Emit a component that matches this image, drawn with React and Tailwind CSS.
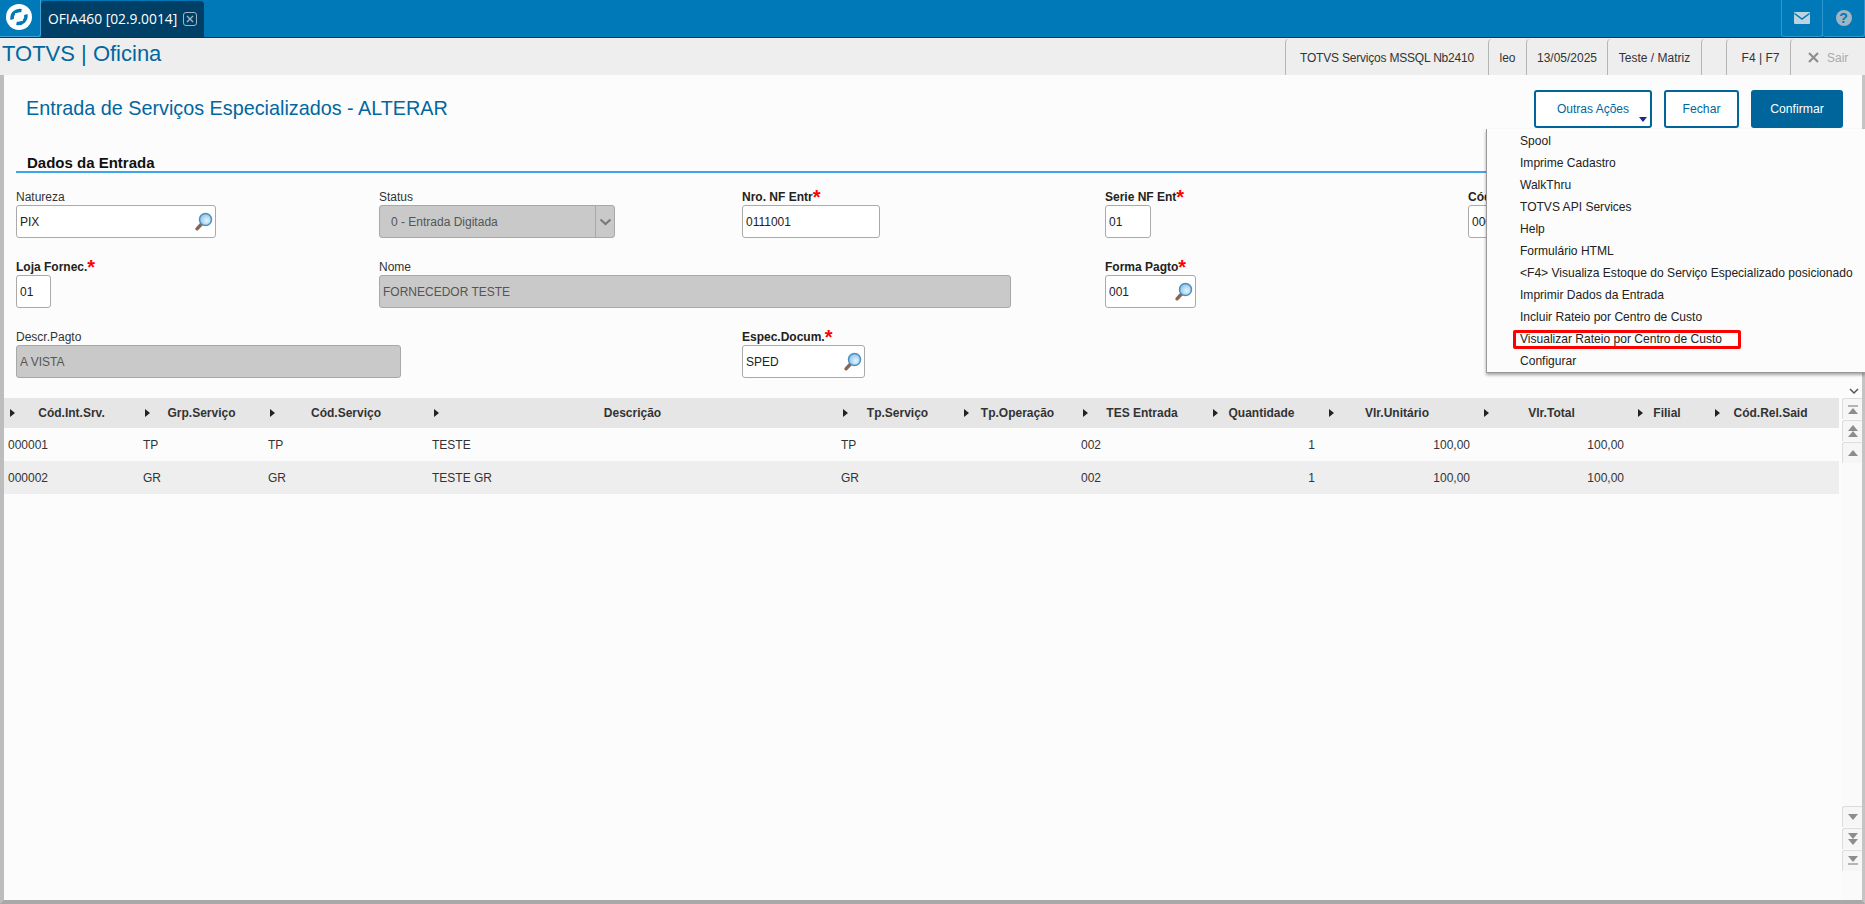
const menuItems = [
  'Spool',
  'Imprime Cadastro',
  'WalkThru',
  'TOTVS API Services',
  'Help',
  'Formulário HTML',
  '<F4> Visualiza Estoque do Serviço Especializado posicionado',
  'Imprimir Dados da Entrada',
  'Incluir Rateio por Centro de Custo',
  'Visualizar Rateio por Centro de Custo',
  'Configurar',
]

const columns = ['Cód.Int.Srv.', 'Grp.Serviço', 'Cód.Serviço', 'Descrição', 'Tp.Serviço', 'Tp.Operação', 'TES Entrada', 'Quantidade', 'Vlr.Unitário', 'Vlr.Total', 'Filial', 'Cód.Rel.Said']

const rows = [
  ['000001', 'TP', 'TP', 'TESTE', 'TP', '', '002', '1', '100,00', '100,00', '', ''],
  ['000002', 'GR', 'GR', 'TESTE GR', 'GR', '', '002', '1', '100,00', '100,00', '', ''],
]

const gridCols = 'grid grid-cols-[135px_125px_164px_409px_121px_119px_130px_116px_155px_154px_77px_130px]'

function Lupa() {
  return (
    <svg width="20" height="20" viewBox="0 0 20 20" className="shrink-0">
      <defs>
        <radialGradient id="vidro" cx="0.6" cy="0.6" r="0.7">
          <stop offset="0" stopColor="#e4f4fc" />
          <stop offset="1" stopColor="#7fbce6" />
        </radialGradient>
      </defs>
      <path d="M7.5 12L3 16.8" stroke="#8a6650" strokeWidth="3.4" strokeLinecap="round" />
      <circle cx="11.5" cy="7.5" r="6" fill="url(#vidro)" stroke="#4a8fbf" strokeWidth="1.5" />
    </svg>
  )
}

function Logo() {
  return (
    <svg width="26" height="26" viewBox="0 0 26 26">
      <circle cx="13" cy="13" r="13" fill="#fff" />
      <path d="M6.2 15.5C5 10.5 9.5 5.5 15.5 6.6" stroke="#0079b8" strokeWidth="3.4" fill="none" />
      <path d="M19.8 10.5C21 15.5 16.5 20.5 10.5 19.4" stroke="#0079b8" strokeWidth="3.4" fill="none" />
      <path d="M9 9h6l2 8h-6z" fill="#fff" />
    </svg>
  )
}

function Field({ label, required, value, width, disabled, lupa, select, className }) {
  return (
    <div className={className}>
      <div className={'h-[17px] leading-[16px] whitespace-nowrap ' + (required ? 'pt-[1px] font-bold text-[#222]' : 'pt-[1px] text-[#333]')}>
        {label}
        {required && <span className="text-[#ff0000] text-[20px] leading-[10px] font-bold align-[-3px]">*</span>}
      </div>
      <div
        className={'h-[33px] flex items-center border rounded-[3px] ' +
          (disabled ? 'bg-[#c9c9c9] border-[#a8a8a8] text-[#555] ' : 'bg-white border-[#aaaaaa] text-[#222] ')}
        style={{ width }}
      >
        <span className={'flex-1 whitespace-nowrap ' + (select ? 'pl-[11px]' : 'pl-[3px]')}>{value}</span>
        {lupa && <span className="pr-[1px]"><Lupa /></span>}
        {select && (
          <span className="w-[19px] h-full border-l border-[#a8a8a8] flex items-center justify-center">
            <svg width="13" height="8" viewBox="0 0 13 8"><path d="M1.5 1.5L6.5 6l5-4.5" stroke="#7a7a7a" strokeWidth="2.2" fill="none" /></svg>
          </span>
        )}
      </div>
    </div>
  )
}

function ScrollBtn({ children }) {
  return (
    <div className="h-[21px] w-[20px] bg-[#f6f6f6] border-l border-t border-[#dcdcdc] rounded-tl-[3px] flex flex-col items-center justify-center">
      {children}
    </div>
  )
}

const Up = () => <span className="w-0 h-0 border-l-[5px] border-r-[5px] border-b-[6px] border-l-transparent border-r-transparent border-b-[#8d8d8d]" />
const Down = () => <span className="w-0 h-0 border-l-[5px] border-r-[5px] border-t-[6px] border-l-transparent border-r-transparent border-t-[#8d8d8d]" />
const Bar = () => <span className="w-[10px] h-[2px] bg-[#b5b5b5] my-[1px]" />

export default function App() {
  return (
    <div className="relative h-[904px] w-full overflow-hidden flex flex-col bg-[#eeeeee] text-[12px] text-[#222]" style={{ fontFamily: '"Liberation Sans", Arial, sans-serif' }}>
      {/* Barra azul */}
      <div className="h-[38px] shrink-0 flex bg-[#0079b8] border-b-[1px] border-[#00395c]">
        <div className="w-[41px] flex items-center justify-center pb-[3px] pr-[3px] border-r border-b border-[#3fa3d8] rounded-br-[3px]">
          <Logo />
        </div>
        <div className="w-[163px] bg-[#003f66] rounded-t-[4px] mt-[1px] flex items-center pl-[7px] text-white text-[13.8px]" style={{ fontFamily: '"Open Sans", sans-serif' }}>
          <span className="whitespace-nowrap">OFIA460 [02.9.0014]</span>
          <span className="ml-[6px] w-[14px] h-[14px] border border-[#9fb6c4] rounded-[3px] flex items-center justify-center">
            <svg width="8" height="8" viewBox="0 0 8 8"><path d="M1 1l6 6M7 1L1 7" stroke="#9fb6c4" strokeWidth="1.4" /></svg>
          </span>
        </div>
        <div className="flex-1" />
        <div className="w-[42px] flex items-center justify-center border-l border-b border-r border-[#2f97cf] rounded-b-[3px]">
          <svg width="16" height="12" viewBox="0 0 16 12"><rect width="16" height="12" rx="1" fill="#bcd3e0" /><path d="M0.5 1.5L8 7l7.5-5.5" stroke="#0079b8" strokeWidth="1.5" fill="none" /></svg>
        </div>
        <div className="w-[42px] flex items-center justify-center border-b border-r border-[#2f97cf] rounded-b-[3px]">
          <span className="w-[16px] h-[16px] rounded-full bg-[#9fb6c4] text-[#0079b8] font-bold text-[14px] flex items-center justify-center">?</span>
        </div>
      </div>

      {/* Barra de status */}
      <div className="h-[37px] shrink-0 flex items-stretch bg-[#eeeeee] mt-[1px] -mb-[1px]">
        <div className="flex-1 pl-[2px] text-[#00679f] text-[22px] leading-[30px] whitespace-nowrap">TOTVS | Oficina</div>
        {[['TOTVS Serviços MSSQL Nb2410', 203, 'tracking-[-0.2px]'], ['leo', 38, ''], ['13/05/2025', 81, ''], ['Teste / Matriz', 94, ''], ['', 25, ''], ['F4 | F7', 64, 'pl-[4px]']].map(([text, w, extra]) => (
          <div key={w} style={{ width: w }} className={'border-l border-[#b5b5b5] rounded-tl-[4px] flex items-center justify-center text-[#333] whitespace-nowrap ' + extra}>{text}</div>
        ))}
        <div className="w-[75px] border-l border-[#b5b5b5] rounded-tl-[4px] flex items-center pl-[17px] gap-[8px] text-[#aaaaaa]">
          <svg width="11" height="11" viewBox="0 0 11 11"><path d="M1 1l9 9M10 1L1 10" stroke="#8f8f8f" strokeWidth="2.2" /></svg>
          Sair
        </div>
      </div>

      {/* Conteudo */}
      <div className="flex-1 min-h-0 flex flex-col bg-[#fcfcfc] border-l-[4px] border-r-[3px] border-b-[4px] border-l-[#bdbdbd] border-r-[#c4c4c4] border-b-[#a9a9a9]">
        <div className="h-[53px] shrink-0 flex items-start justify-between pl-[22px] pr-[19px] pt-[15px]">
          <h1 className="mt-[3px] text-[#00679f] text-[19.8px] leading-[30px] whitespace-nowrap">Entrada de Serviços Especializados - ALTERAR</h1>
          <div className="flex gap-[12px] h-[38px]">
            <button className="relative w-[118px] border-2 border-[#00659b] rounded-[3px] bg-white text-[#00679f] text-[12px]">
              Outras Ações
              <span className="absolute right-[3px] bottom-[4px] w-0 h-0 border-l-[4px] border-r-[4px] border-t-[5px] border-l-transparent border-r-transparent border-t-[#1a2a9a]" />
            </button>
            <button className="w-[75px] border-2 border-[#00659b] rounded-[3px] bg-white text-[#00679f] text-[12.2px]">Fechar</button>
            <button className="w-[92px] rounded-[3px] bg-[#00659b] text-white text-[12.2px]">Confirmar</button>
          </div>
        </div>

        <div className="ml-[12px] mr-[15px] mt-[26px] h-[19px] shrink-0 border-b-[2px] border-[#3ea6ec] pl-[11px] font-bold text-[15px] leading-[17px] text-[#111]">Dados da Entrada</div>

        <div className="ml-[12px] mt-[15px] grid grid-cols-[363px_363px_363px_363px_363px] auto-rows-[70px] shrink-0">
          <Field label="Natureza" value="PIX" width={200} lupa />
          <Field label="Status" value="0 - Entrada Digitada" width={236} disabled select />
          <Field label="Nro. NF Entr" required value="0111001" width={138} />
          <Field label="Serie NF Ent" required value="01" width={46} />
          <Field label="Cód.Fornece" required value="000001" width={120} />

          <Field label="Loja Fornec." required value="01" width={35} />
          <Field label="Nome" value="FORNECEDOR TESTE" width={632} disabled className="col-span-2" />
          <Field label="Forma Pagto" required value="001" width={91} lupa className="col-start-4" />
          <div />

          <Field label="Descr.Pagto" value="A VISTA" width={385} disabled />
          <div />
          <Field label="Espec.Docum." required value="SPED" width={123} lupa />
        </div>

        {/* Grid de itens */}
        <div className="relative flex-1 min-h-0 flex">
          <div className="w-[1835px] shrink-0">
            <div className={gridCols + ' h-[30px] bg-[#e6e6e6] font-bold text-[#333]'}>
              {columns.map((c, i) => (
                <div key={c} className="flex items-center pl-[6px] pr-[6px]">
                  <span className="w-0 h-0 shrink-0 border-t-[4px] border-b-[4px] border-l-[5px] border-t-transparent border-b-transparent border-l-[#222]" />
                  <span className={'flex-1 text-center whitespace-nowrap ' + (i >= 7 ? 'pr-[12px]' : 'pr-[5px]')}>{c}</span>
                </div>
              ))}
            </div>
            {rows.map((r, i) => (
              <div key={i} className={gridCols + ' h-[33px] items-center text-[#333] ' + (i % 2 ? 'bg-[#eeeeee]' : 'bg-[#fcfcfc]')}>
                {r.map((v, j) => (
                  <div key={j} className={'whitespace-nowrap ' + (j === 7 || j === 8 || j === 9 ? 'pr-[8px] text-right' : 'px-[4px]')}>{v}</div>
                ))}
              </div>
            ))}
          </div>
          <div className="ml-[3px] flex-1 flex flex-col justify-between pb-[29px] bg-[#fafafa]">
            <div className="flex flex-col gap-[1px]">
              <ScrollBtn><Bar /><Up /></ScrollBtn>
              <ScrollBtn><Up /><Up /></ScrollBtn>
              <ScrollBtn><Up /></ScrollBtn>
            </div>
            <div className="flex flex-col gap-[1px]">
              <ScrollBtn><Down /></ScrollBtn>
              <ScrollBtn><Down /><Down /></ScrollBtn>
              <ScrollBtn><Down /><Bar /></ScrollBtn>
            </div>
          </div>
          <svg width="10" height="7" viewBox="0 0 10 7" className="absolute right-[3px] top-[-10px]"><path d="M1 1l4 4 4-4" stroke="#555" strokeWidth="1.5" fill="none" /></svg>
        </div>
      </div>

      {/* Menu Outras Acoes */}
      <div className="absolute left-[1486px] top-[129px] w-[379px] h-[244px] bg-[#fcfcfc] border-l border-b border-[#9a9a9a] shadow-[0_2px_3px_rgba(0,0,0,0.35)] pt-[1px] text-[12.05px] text-[#222]">
        {menuItems.map(item => (
          <div key={item} className="relative h-[22px] leading-[22px] pl-[33px] whitespace-nowrap">
            {item}
            {item.startsWith('Visualizar') && <span className="absolute left-[26px] top-[2px] w-[228px] h-[19px] border-[3px] border-[#ff0000] rounded-[2px]" />}
          </div>
        ))}
      </div>
    </div>
  )
}
